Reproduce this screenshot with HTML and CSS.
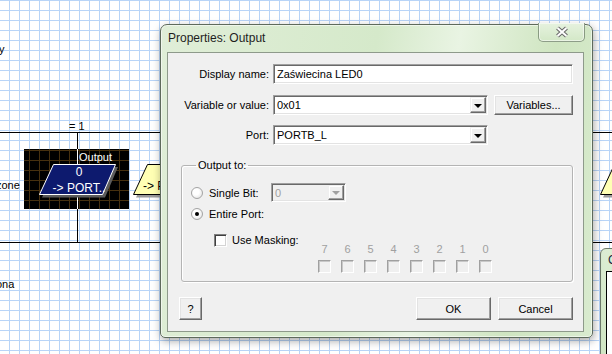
FILE: index.html
```html
<!DOCTYPE html>
<html lang="pl">
<head>
<meta charset="UTF-8">
<meta name="viewport" content="width=device-width, initial-scale=1.0">
<title>Properties: Output</title>
<link rel="stylesheet" href="styles.css">
</head>
<body>
<div class="desk">
    <!-- flowchart behind the dialog -->
    <div class="wire wire-top"></div>
    <div class="wire wire-bottom"></div>
    <div class="wire wire-down"></div>
    <div class="note note-y">y</div>
    <div class="note note-eq">= 1</div>
    <div class="note note-zone">zone</div>
    <div class="note note-ona">ona</div>

    <div class="node node-selected">
        <svg class="shape" width="105" height="60" viewBox="0 0 105 60">
            <path d="M53.5 0 V15 M53.5 46 V60" stroke="#fff" stroke-width="1"/>
            <polygon points="32,18 94,18 81,48.5 18,48.5" fill="#5c5c5c"/>
            <polygon points="29.5,15.5 91.5,15.5 78.5,45.5 15.5,45.5" fill="#0d1a6e" stroke="#fff"/>
        </svg>
        <span class="node-caption">Output</span>
        <span class="node-text">0<br>-&gt; PORT..</span>
    </div>

    <div class="node node-yellow">
        <svg class="shape" width="100" height="40" viewBox="0 0 100 40">
            <polygon points="20,7 93,7 79,37.5 6,37.5" fill="#9a9a9a"/>
            <polygon points="17.5,4.5 90.5,4.5 76.5,34.5 3.5,34.5" fill="#ffffb4" stroke="#000"/>
        </svg>
        <span class="node-label">-&gt; P</span>
    </div>

    <div class="node node-edge">
        <svg class="shape" width="30" height="40" viewBox="0 0 30 40">
            <polygon points="20,7 60,7 60,37.5 5,37.5" fill="#9a9a9a"/>
            <polygon points="16.5,4.5 60,4.5 60,34.5 2.5,34.5" fill="#ffffb4" stroke="#000"/>
        </svg>
    </div>

    <div class="mini-win">
        <div class="mini-title">C</div>
        <div class="mini-client"></div>
    </div>

    <!-- Properties dialog -->
    <div class="dialog">
        <div class="titlebar">
            <span class="title">Properties: Output</span>
            <span class="close">
                <svg width="14" height="12" viewBox="0 0 14 12">
                    <path d="M2.5 2 L11.5 10 M11.5 2 L2.5 10" stroke="#6a6a6a" stroke-width="4.2"/>
                    <path d="M2.5 2 L11.5 10 M11.5 2 L2.5 10" stroke="#fff" stroke-width="2"/>
                </svg>
            </span>
        </div>
        <div class="client">
            <div class="field-row">
                <label class="field-label">Display name:</label>
                <div class="edit edit-wide">Zaświecina LED0</div>
            </div>
            <div class="field-row row-2">
                <label class="field-label">Variable or value:</label>
                <div class="edit combo"><span>0x01</span><i class="drop"></i></div>
                <button class="btn btn-vars">Variables...</button>
            </div>
            <div class="field-row row-3">
                <label class="field-label">Port:</label>
                <div class="edit combo"><span>PORTB_L</span><i class="drop"></i></div>
            </div>

            <fieldset class="group">
                <legend>Output to:</legend>
                <div class="opt-row">
                    <span class="radio"></span>
                    <span class="opt-label">Single Bit:</span>
                    <div class="edit combo combo-small disabled"><span>0</span><i class="drop"></i></div>
                </div>
                <div class="opt-row row-entire">
                    <span class="radio on"></span>
                    <span class="opt-label">Entire Port:</span>
                </div>
                <div class="mask-row">
                    <div class="mask-check">
                        <span class="check"></span>
                        <span>Use Masking:</span>
                    </div>
                    <div class="mask">
                        <div class="bit"><span>7</span><i></i></div>
                        <div class="bit"><span>6</span><i></i></div>
                        <div class="bit"><span>5</span><i></i></div>
                        <div class="bit"><span>4</span><i></i></div>
                        <div class="bit"><span>3</span><i></i></div>
                        <div class="bit"><span>2</span><i></i></div>
                        <div class="bit"><span>1</span><i></i></div>
                        <div class="bit"><span>0</span><i></i></div>
                    </div>
                </div>
            </fieldset>

            <div class="button-row">
                <button class="btn btn-help">?</button>
                <button class="btn btn-ok">OK</button>
                <button class="btn btn-cancel">Cancel</button>
            </div>
        </div>
    </div>
</div>
</body>
</html>
```

FILE: styles.css
```css
body {
    margin: 0;
    padding: 0;
    font-family: "Liberation Sans", Arial, sans-serif;
    font-size: 11px;
    color: #000;
}
.desk {
    position: relative;
    width: 612px;
    height: 354px;
    overflow: hidden;
    background-color: #fff;
    background-image:
        linear-gradient(to right, #b8d4f7 1px, transparent 1px),
        linear-gradient(to bottom, #b8d4f7 1px, transparent 1px);
    background-size: 10px 10px;
    background-position: 9px 10px;
}

/* flowchart */
.wire {
    position: absolute;
    background-color: #000;
}
.wire-top {
    left: 0;
    right: 0;
    top: 132px;
    height: 1px;
}
.wire-bottom {
    left: 0;
    right: 0;
    top: 242px;
    height: 1px;
}
.wire-down {
    left: 77px;
    top: 132px;
    width: 1px;
    height: 110px;
}
.note {
    position: absolute;
    line-height: 13px;
    white-space: nowrap;
}
.note-y {
    left: -1px;
    top: 43px;
}
.note-eq {
    left: 69px;
    top: 120px;
}
.note-zone {
    left: -4px;
    top: 179px;
}
.note-ona {
    left: -4px;
    top: 278px;
}
.node {
    position: absolute;
}
.shape {
    display: block;
}
.node-selected {
    left: 24px;
    top: 149px;
    width: 105px;
    height: 60px;
    background-color: #000;
    background-image:
        linear-gradient(to right, #46300f 1px, transparent 1px),
        linear-gradient(to bottom, #46300f 1px, transparent 1px);
    background-size: 10px 10px;
    background-position: 5px 1px;
}
.node-caption {
    position: absolute;
    right: 17px;
    top: 2px;
    color: #fff;
    line-height: 13px;
}
.node-text {
    position: absolute;
    left: 10px;
    top: 15px;
    width: 90px;
    text-align: center;
    color: #fff;
    font-size: 12px;
    line-height: 16px;
    white-space: nowrap;
}
.node-yellow {
    left: 130px;
    top: 160px;
    width: 100px;
    height: 40px;
}
.node-label {
    position: absolute;
    left: 13px;
    top: 20px;
    font-size: 12px;
    line-height: 13px;
    white-space: nowrap;
}
.node-edge {
    left: 598px;
    top: 160px;
    width: 30px;
    height: 40px;
}
.mini-win {
    position: absolute;
    left: 600px;
    top: 248px;
    width: 40px;
    height: 120px;
    box-sizing: border-box;
    border: 1px solid #6f7b6c;
    border-radius: 6px 0 0 0;
    background: linear-gradient(#dcedd3, #cfe5c2);
    padding: 3px 0 0 5px;
}
.mini-title {
    padding-left: 2px;
    font-size: 12px;
    line-height: 16px;
    color: #1b1b3a;
}
.mini-client {
    margin-top: 3px;
    height: 100px;
    border: 1px solid #000;
    background: #fff;
}

/* dialog */
.dialog {
    position: absolute;
    left: 160px;
    top: 24px;
    width: 433px;
    height: 314px;
    box-sizing: border-box;
    border: 1px solid #5e6a5b;
    border-radius: 7px 7px 5px 5px;
    padding: 0 8px 5px 6px;
    display: flex;
    flex-direction: column;
    background: linear-gradient(100deg, #e0eed8 0%, #d5e9ca 45%, #e9f4e3 62%, #cfe5c1 82%, #d9ebcf 100%);
    box-shadow: inset 0 0 0 1px rgba(255, 255, 255, 0.55), 1px 3px 9px rgba(0, 0, 0, 0.35);
}
.titlebar {
    height: 27px;
    display: flex;
    justify-content: space-between;
    align-items: flex-start;
}
.title {
    padding: 5px 0 0 1px;
    font-size: 12px;
    line-height: 16px;
    color: #1e1e1e;
}
.close {
    width: 47px;
    height: 19px;
    margin-top: -2px;
    margin-right: -1px;
    box-sizing: border-box;
    border: 1px solid rgba(70, 88, 66, 0.55);
    border-top: none;
    border-radius: 0 0 5px 5px;
    background: linear-gradient(#e6f2df, #d3e8c7);
    box-shadow: inset 0 0 0 1px rgba(255, 255, 255, 0.5);
    display: flex;
    align-items: center;
    justify-content: center;
}
.client {
    flex: 1;
    border: 1px solid #8e9a8b;
    background-color: #f0f0f0;
    padding: 11px 10px 0 0;
    display: flex;
    flex-direction: column;
}
.field-row {
    display: flex;
    align-items: center;
    height: 20px;
}
.row-2 {
    margin-top: 11px;
}
.row-3 {
    margin-top: 10px;
}
.field-label {
    width: 101px;
    margin-right: 4px;
    text-align: right;
}

/* classic controls */
.edit {
    box-sizing: border-box;
    height: 20px;
    border: 1px solid;
    border-color: #a0a0a0 #fff #fff #a0a0a0;
    box-shadow: inset 1px 1px 0 #696969, inset -1px -1px 0 #e3e3e3;
    background-color: #fff;
    padding: 0 3px;
    display: flex;
    align-items: center;
    white-space: nowrap;
}
.edit-wide {
    width: 300px;
}
.combo {
    width: 215px;
    padding: 1px 1px 1px 3px;
    justify-content: space-between;
}
.drop {
    width: 16px;
    height: 16px;
    box-sizing: border-box;
    border: 1px solid;
    border-color: #f0f0f0 #696969 #696969 #f0f0f0;
    box-shadow: inset -1px -1px 0 #a0a0a0, inset 1px 1px 0 #fff;
    background-color: #f0f0f0;
    display: flex;
    align-items: center;
    justify-content: center;
}
.drop::after {
    content: "";
    border-left: 4px solid transparent;
    border-right: 4px solid transparent;
    border-top: 4px solid #000;
    margin-top: 1px;
}
.combo-small {
    width: 75px;
    height: 19px;
}
.combo-small .drop {
    height: 15px;
}
.disabled {
    background-color: #f0f0f0;
    color: #a0a0a0;
}
.disabled .drop::after {
    border-top-color: #a0a0a0;
}
.btn {
    box-sizing: border-box;
    height: 23px;
    padding: 0;
    border: 1px solid;
    border-color: #fff #696969 #696969 #fff;
    box-shadow: inset -1px -1px 0 #a0a0a0, inset 1px 1px 0 #e3e3e3;
    background-color: #f0f0f0;
    font-family: "Liberation Sans", Arial, sans-serif;
    font-size: 11px;
    color: #000;
}
.btn-vars {
    width: 79px;
    height: 20px;
    margin-left: 6px;
}

/* group box */
.group {
    margin: 14px 0 0 13px;
    width: 392px;
    box-sizing: border-box;
    padding: 0 0 8px 9px;
    border: 1px solid #b4b4b4;
    border-radius: 3px;
    box-shadow: inset 1px 1px 0 #fff, 1px 1px 0 #fff;
}
.group legend {
    margin-left: 5px;
    padding: 0 2px;
    line-height: 13px;
}
.opt-row {
    display: flex;
    align-items: center;
    height: 19px;
    margin-top: 11px;
}
.row-entire {
    height: 14px;
    margin-top: 5px;
}
.radio {
    width: 12px;
    height: 12px;
    box-sizing: border-box;
    margin-right: 6px;
    border: 1px solid #a4a4a4;
    border-radius: 50%;
    background: radial-gradient(circle at 40% 40%, #fff 35%, #dadada 100%);
    display: flex;
    align-items: center;
    justify-content: center;
}
.radio.on::after {
    content: "";
    width: 4px;
    height: 4px;
    border-radius: 50%;
    background-color: #000;
}
.opt-label {
    width: 62px;
}
.mask-row {
    display: flex;
    margin-top: 12px;
    padding-left: 23px;
}
.mask-check {
    width: 104px;
    display: flex;
    align-items: flex-start;
    line-height: 14px;
}
.check {
    width: 13px;
    height: 13px;
    box-sizing: border-box;
    margin: 1px 5px 0 0;
    border: 1px solid;
    border-color: #808080 #fff #fff #808080;
    box-shadow: inset 1px 1px 0 #404040, inset -1px -1px 0 #d4d4d4;
    background-color: #fff;
}
.mask {
    display: flex;
    gap: 10px;
    margin-top: 10px;
}
.bit {
    width: 13px;
    display: flex;
    flex-direction: column;
    align-items: center;
    color: #a0a0a0;
    line-height: 13px;
}
.bit i {
    width: 13px;
    height: 13px;
    box-sizing: border-box;
    margin-top: 4px;
    border: 1px solid;
    border-color: #a0a0a0 #fff #fff #a0a0a0;
    box-shadow: inset 1px 1px 0 #c8c8c8;
    background-color: #f0f0f0;
}

/* bottom buttons */
.button-row {
    display: flex;
    margin-top: 15px;
    padding-left: 11px;
}
.btn-help {
    width: 23px;
}
.btn-ok {
    width: 75px;
    margin-left: auto;
}
.btn-cancel {
    width: 75px;
    margin-left: 7px;
}
```
